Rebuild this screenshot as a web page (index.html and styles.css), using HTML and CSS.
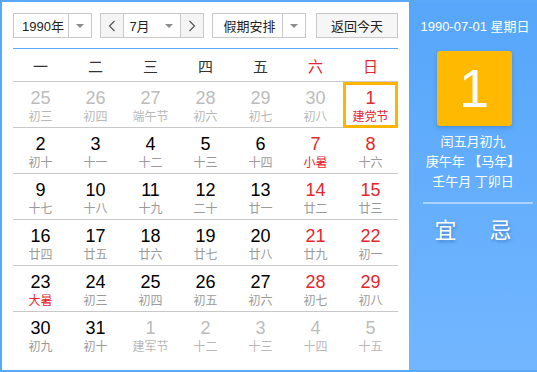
FILE: index.html
```html
<!DOCTYPE html>
<html lang="zh-CN">
<head>
  <meta charset="UTF-8" />
  <title>万年历</title>
  <link rel="stylesheet" href="styles.css">
</head>
<body>
  <div class="calendar">
    <div class="main">
      <div class="toolbar">
        <div class="select year">
          <span class="select-text">1990年</span>
          <span class="select-arrow"><i class="caret"></i></span>
        </div>
        <div class="month-group">
          <span class="nav-btn">
            <svg width="8" height="12" viewBox="0 0 8 12"><polyline points="6.5,1 1.5,6 6.5,11" fill="none" stroke="#555" stroke-width="1.2"/></svg>
          </span>
          <div class="select month">
            <span class="select-text">7月</span>
            <span class="select-arrow plain"><i class="caret"></i></span>
          </div>
          <span class="nav-btn">
            <svg width="8" height="12" viewBox="0 0 8 12"><polyline points="1.5,1 6.5,6 1.5,11" fill="none" stroke="#555" stroke-width="1.2"/></svg>
          </span>
        </div>
        <div class="select holiday">
          <span class="select-text">假期安排</span>
          <span class="select-arrow"><i class="caret"></i></span>
        </div>
        <div class="today-btn">返回今天</div>
      </div>

      <div class="week">
        <span>一</span><span>二</span><span>三</span><span>四</span><span>五</span><span class="red">六</span><span class="red">日</span>
      </div>

      <div class="days">
        <div class="row">
          <div class="day other"><b>25</b><em>初三</em></div>
          <div class="day other"><b>26</b><em>初四</em></div>
          <div class="day other"><b>27</b><em>端午节</em></div>
          <div class="day other"><b>28</b><em>初六</em></div>
          <div class="day other"><b>29</b><em>初七</em></div>
          <div class="day other"><b>30</b><em>初八</em></div>
          <div class="day wkend fest today"><b>1</b><em>建党节</em></div>
        </div>
        <div class="row">
          <div class="day"><b>2</b><em>初十</em></div>
          <div class="day"><b>3</b><em>十一</em></div>
          <div class="day"><b>4</b><em>十二</em></div>
          <div class="day"><b>5</b><em>十三</em></div>
          <div class="day"><b>6</b><em>十四</em></div>
          <div class="day wkend fest"><b>7</b><em>小暑</em></div>
          <div class="day wkend"><b>8</b><em>十六</em></div>
        </div>
        <div class="row">
          <div class="day"><b>9</b><em>十七</em></div>
          <div class="day"><b>10</b><em>十八</em></div>
          <div class="day"><b>11</b><em>十九</em></div>
          <div class="day"><b>12</b><em>二十</em></div>
          <div class="day"><b>13</b><em>廿一</em></div>
          <div class="day wkend"><b>14</b><em>廿二</em></div>
          <div class="day wkend"><b>15</b><em>廿三</em></div>
        </div>
        <div class="row">
          <div class="day"><b>16</b><em>廿四</em></div>
          <div class="day"><b>17</b><em>廿五</em></div>
          <div class="day"><b>18</b><em>廿六</em></div>
          <div class="day"><b>19</b><em>廿七</em></div>
          <div class="day"><b>20</b><em>廿八</em></div>
          <div class="day wkend"><b>21</b><em>廿九</em></div>
          <div class="day wkend"><b>22</b><em>初一</em></div>
        </div>
        <div class="row">
          <div class="day fest"><b>23</b><em>大暑</em></div>
          <div class="day"><b>24</b><em>初三</em></div>
          <div class="day"><b>25</b><em>初四</em></div>
          <div class="day"><b>26</b><em>初五</em></div>
          <div class="day"><b>27</b><em>初六</em></div>
          <div class="day wkend"><b>28</b><em>初七</em></div>
          <div class="day wkend"><b>29</b><em>初八</em></div>
        </div>
        <div class="row">
          <div class="day"><b>30</b><em>初九</em></div>
          <div class="day"><b>31</b><em>初十</em></div>
          <div class="day other"><b>1</b><em>建军节</em></div>
          <div class="day other"><b>2</b><em>十二</em></div>
          <div class="day other"><b>3</b><em>十三</em></div>
          <div class="day other"><b>4</b><em>十四</em></div>
          <div class="day other"><b>5</b><em>十五</em></div>
        </div>
      </div>
    </div>

    <div class="side">
      <div class="side-date">1990-07-01 星期日</div>
      <div class="big-day">1</div>
      <div class="lunar">
        <p>闰五月初九</p>
        <p>庚午年 【马年】</p>
        <p>壬午月 丁卯日</p>
      </div>
      <div class="side-line"></div>
      <div class="yiji"><span>宜</span><span>忌</span></div>
    </div>
  </div>
</body>
</html>
```

FILE: styles.css
```css
* {
  box-sizing: border-box;
  margin: 0;
  padding: 0;
}

body {
  background: #fff;
  font-family: 'Liberation Sans', 'Noto Sans CJK SC', sans-serif;
  color: #000;
}

.calendar {
  width: 537px;
  height: 372px;
  display: flex;
  border: 2px solid #5aa8f8;
  border-right: none;
}

/* left part */
.main {
  width: 407px;
  padding: 11px 11px 0 11px;
  background: #fff;
}

.toolbar {
  display: flex;
  height: 25px;
  gap: 8px;
  font-size: 13px;
  color: #222;
}

.select {
  display: flex;
  border: 1px solid #c8c8c8;
  background: #fff;
}

.select-text {
  flex: 1;
  display: flex;
  align-items: center;
  justify-content: center;
  padding-left: 4px;
}

.select-arrow {
  width: 23px;
  border-left: 1px solid #c8c8c8;
  display: flex;
  align-items: center;
  justify-content: center;
}

.select-arrow.plain {
  border-left: none;
}

.caret {
  width: 0;
  height: 0;
  border-left: 4px solid transparent;
  border-right: 4px solid transparent;
  border-top: 4px solid #8c8c8c;
}

.year { width: 79px; }

.month-group {
  width: 104px;
  display: flex;
  border: 1px solid #c8c8c8;
}

.nav-btn {
  width: 22px;
  background: #f4f4f4;
  display: flex;
  align-items: center;
  justify-content: center;
}

.select.month {
  flex: 1;
  border: none;
  border-left: 1px solid #c8c8c8;
  border-right: 1px solid #c8c8c8;
}

.select.month .select-text {
  padding-left: 0;
  padding-right: 2px;
}

.holiday { width: 94px; margin-right: 2px; }

.today-btn {
  width: 82px;
  border: 1px solid #c8c8c8;
  background: #f6f6f6;
  display: flex;
  align-items: center;
  justify-content: center;
}

.week {
  margin-top: 10px;
  border-top: 1px solid #5aa8f8;
  border-bottom: 1px solid #c8c8c8;
  height: 34px;
  display: grid;
  grid-template-columns: repeat(7, 55px);
  align-items: center;
  font-size: 15px;
  color: #333;
  text-align: center;
}

.red { color: #e5262f; }

.row {
  display: grid;
  grid-template-columns: repeat(7, 55px);
  height: 46px;
  border-bottom: 1px solid #c8c8c8;
}

.row:last-child { border-bottom: none; }

.day {
  position: relative;
  text-align: center;
  padding-top: 6px;
}

.day b {
  display: block;
  font-weight: normal;
  font-size: 18px;
  line-height: 20px;
}

.day em {
  display: block;
  font-style: normal;
  font-size: 12px;
  line-height: 18px;
  color: #9a9a9a;
}

.day.wkend b { color: #e5262f; }
.day.fest em { color: #e5262f; }
.day.other b { color: #bcbcbc; }
.day.other em { color: #b8b8b8; }

.day.today::after {
  content: '';
  position: absolute;
  top: 0;
  left: 0;
  right: 0;
  bottom: -1px;
  border: 3px solid #ffb500;
}

/* right part */
.side {
  flex: 1;
  background: linear-gradient(to bottom, #56a6fa, #72b6ff);
  color: #fff;
  text-align: center;
  display: flex;
  flex-direction: column;
  align-items: center;
}

.side-date {
  margin-top: 16px;
  font-size: 13px;
  line-height: 18px;
  padding-left: 4px;
}

.big-day {
  margin-top: 15px;
  width: 75px;
  height: 75px;
  background: #ffba00;
  border-radius: 3px;
  box-shadow: 0 2px 4px rgba(0, 60, 140, 0.25);
  font-size: 54px;
  line-height: 75px;
  margin-left: 2px;
}

.lunar {
  margin-top: 6px;
  font-size: 13px;
  line-height: 20px;
}

.side-line {
  margin-top: 10px;
  width: 110px;
  height: 2px;
  background: rgba(255, 255, 255, 0.45);
  margin-left: 10px;
}

.yiji {
  margin-top: 14px;
  display: flex;
  gap: 33px;
  font-size: 22px;
  line-height: 26px;
  text-shadow: 1px 2px 3px rgba(0, 50, 130, 0.35);
}
```
